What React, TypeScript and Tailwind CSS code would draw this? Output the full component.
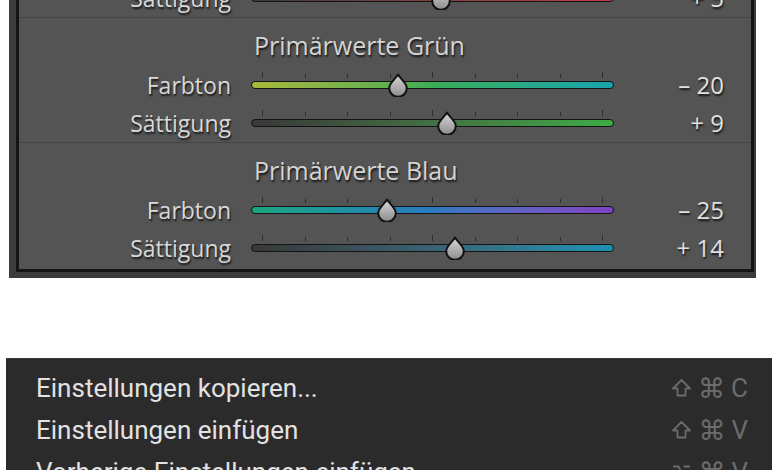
import React from "react";

type Row = { label: string; value: string; pos: number; grad: string };
type Section = { title: string; rows: Row[] };

const TICKS = [0, 1, 2, 3, 4, 5, 6, 7, 8];

const SECTIONS: Section[] = [
  {
    title: "Primärwerte Rot",
    rows: [
      { label: "Farbton", value: "0", pos: 181, grad: "bg-linear-to-r from-[#c0394b] via-[#c8503a] to-[#c88a3a]" },
      { label: "Sättigung", value: "+ 5", pos: 190, grad: "bg-linear-to-r from-[#3a3a3a] to-[#c43a4c]" },
    ],
  },
  {
    title: "Primärwerte Grün",
    rows: [
      { label: "Farbton", value: "– 20", pos: 147, grad: "bg-linear-to-r from-[#a8b83a] via-[#3aad55] to-[#18a4ae]" },
      { label: "Sättigung", value: "+ 9", pos: 196, grad: "bg-linear-to-r from-[#383838] to-[#3dac45]" },
    ],
  },
  {
    title: "Primärwerte Blau",
    rows: [
      { label: "Farbton", value: "– 25", pos: 136, grad: "bg-linear-to-r from-[#1fa57f] via-[#2a7ac0] to-[#8040c4]" },
      { label: "Sättigung", value: "+ 14", pos: 204, grad: "bg-linear-to-r from-[#383838] to-[#1a92b4]" },
    ],
  },
];

function Thumb({ left }: { left: number }) {
  return (
    <svg
      className="absolute top-[7px]"
      style={{ left: left - 11 }}
      width="22"
      height="24"
      viewBox="0 0 22 24"
    >
      <defs>
        <linearGradient id="thumbGrad" x1="0" y1="0" x2="0" y2="1">
          <stop offset="0" stopColor="#d8d8d8" />
          <stop offset="1" stopColor="#8c8c8c" />
        </linearGradient>
      </defs>
      <path
        d="M11 1.5 C13.5 6 19.8 10 19.8 15 A8.8 8.8 0 0 1 2.2 15 C2.2 10 8.5 6 11 1.5 Z"
        fill="url(#thumbGrad)"
        stroke="#111"
        strokeWidth="2"
        strokeLinejoin="round"
      />
    </svg>
  );
}

function Slider({ pos, grad }: { pos: number; grad: string }) {
  return (
    <div className="relative flex h-[38px] w-[363px] items-center">
      <div className="absolute left-0 right-0 top-[6px] flex h-[6px] items-end justify-between px-[11px]">
        {TICKS.map((i) => (
          <div
            key={i}
            className={i % 4 === 0 ? "h-[6px] w-px bg-[#2e2e2e]" : "h-[4px] w-px bg-[#2e2e2e]"}
          />
        ))}
      </div>
      <div className={"h-[8px] w-full rounded-full border border-[#141414] " + grad} />
      <Thumb left={pos} />
    </div>
  );
}

const shadow = "[text-shadow:1px_2px_2px_rgba(0,0,0,0.75)]";

function PanelSection({ section, first }: { section: Section; first: boolean }) {
  return (
    <div className={first ? "" : "border-t border-[#464646]"}>
      <div className="pt-[11px]">
        <div
          className={
            "flex h-[32px] items-center pl-[235px] text-[25px] leading-none text-[#d4d4d4] " + shadow
          }
        >
          {section.title}
        </div>
      </div>
      <div className="mt-[5px]">
        {section.rows.map((r) => (
          <div key={r.label} className="flex h-[38px] items-center">
            <div className={"w-[212px] text-right text-[23px] leading-none text-[#d8d8d8] " + shadow}>
              {r.label}
            </div>
            <div className="w-[20px]" />
            <Slider pos={r.pos} grad={r.grad} />
            <div className={"w-[110px] text-right text-[24px] leading-none text-[#e0e0e0] " + shadow}>
              {r.value}
            </div>
          </div>
        ))}
      </div>
    </div>
  );
}

function ShiftIcon() {
  return (
    <svg width="21" height="20" viewBox="0 0 21 20" fill="none" stroke="#6c6c6c" strokeWidth="1.8" strokeLinejoin="round">
      <path d="M10.5 2 L19 10.5 H14.5 V17.5 H6.5 V10.5 H2 Z" />
    </svg>
  );
}

function OptionIcon() {
  return (
    <svg width="21" height="20" viewBox="0 0 21 20" fill="none" stroke="#6c6c6c" strokeWidth="1.8" strokeLinejoin="round">
      <path d="M2 4.5 H7.5 L13.5 16 H19 M12.5 4.5 H19" />
    </svg>
  );
}

const MENU = [
  { label: "Einstellungen kopieren...", opt: false, key: "C" },
  { label: "Einstellungen einfügen", opt: false, key: "V" },
  { label: "Vorherige Einstellungen einfügen", opt: true, key: "V" },
];

export default function App() {
  return (
    <div className="h-[470px] w-[780px] overflow-hidden bg-white">
      <div className="-mt-[107px] ml-[9px] w-[747px] bg-[#3c3c3c] pb-[6px] pl-[7px] pr-[2px]">
        <div className="border-[3px] border-t-0 border-[#141414] bg-[#545454] pb-[2px] font-['Open_Sans',sans-serif]">
          {SECTIONS.map((s, i) => (
            <PanelSection key={s.title} section={s} first={i === 0} />
          ))}
        </div>
      </div>
      <div className="ml-[6px] mt-[80px] w-[766px] border-t border-[#3a3a3a] bg-[#2b2b2b] pl-[30px] pr-[24px] pt-[8px] font-['Roboto',sans-serif]">
        {MENU.map((m) => (
          <div key={m.label} className="flex h-[42px] items-center justify-between">
            <span className="text-[26px] leading-none text-[#e2e2e2]">{m.label}</span>
            <span className="flex items-center gap-[6px] leading-none text-[#6c6c6c]">
              {m.opt ? <OptionIcon /> : <ShiftIcon />}
              <span className="font-['DejaVu_Sans',sans-serif] text-[27px]">⌘</span>
              <span className="text-[26px]">{m.key}</span>
            </span>
          </div>
        ))}
      </div>
    </div>
  );
}
